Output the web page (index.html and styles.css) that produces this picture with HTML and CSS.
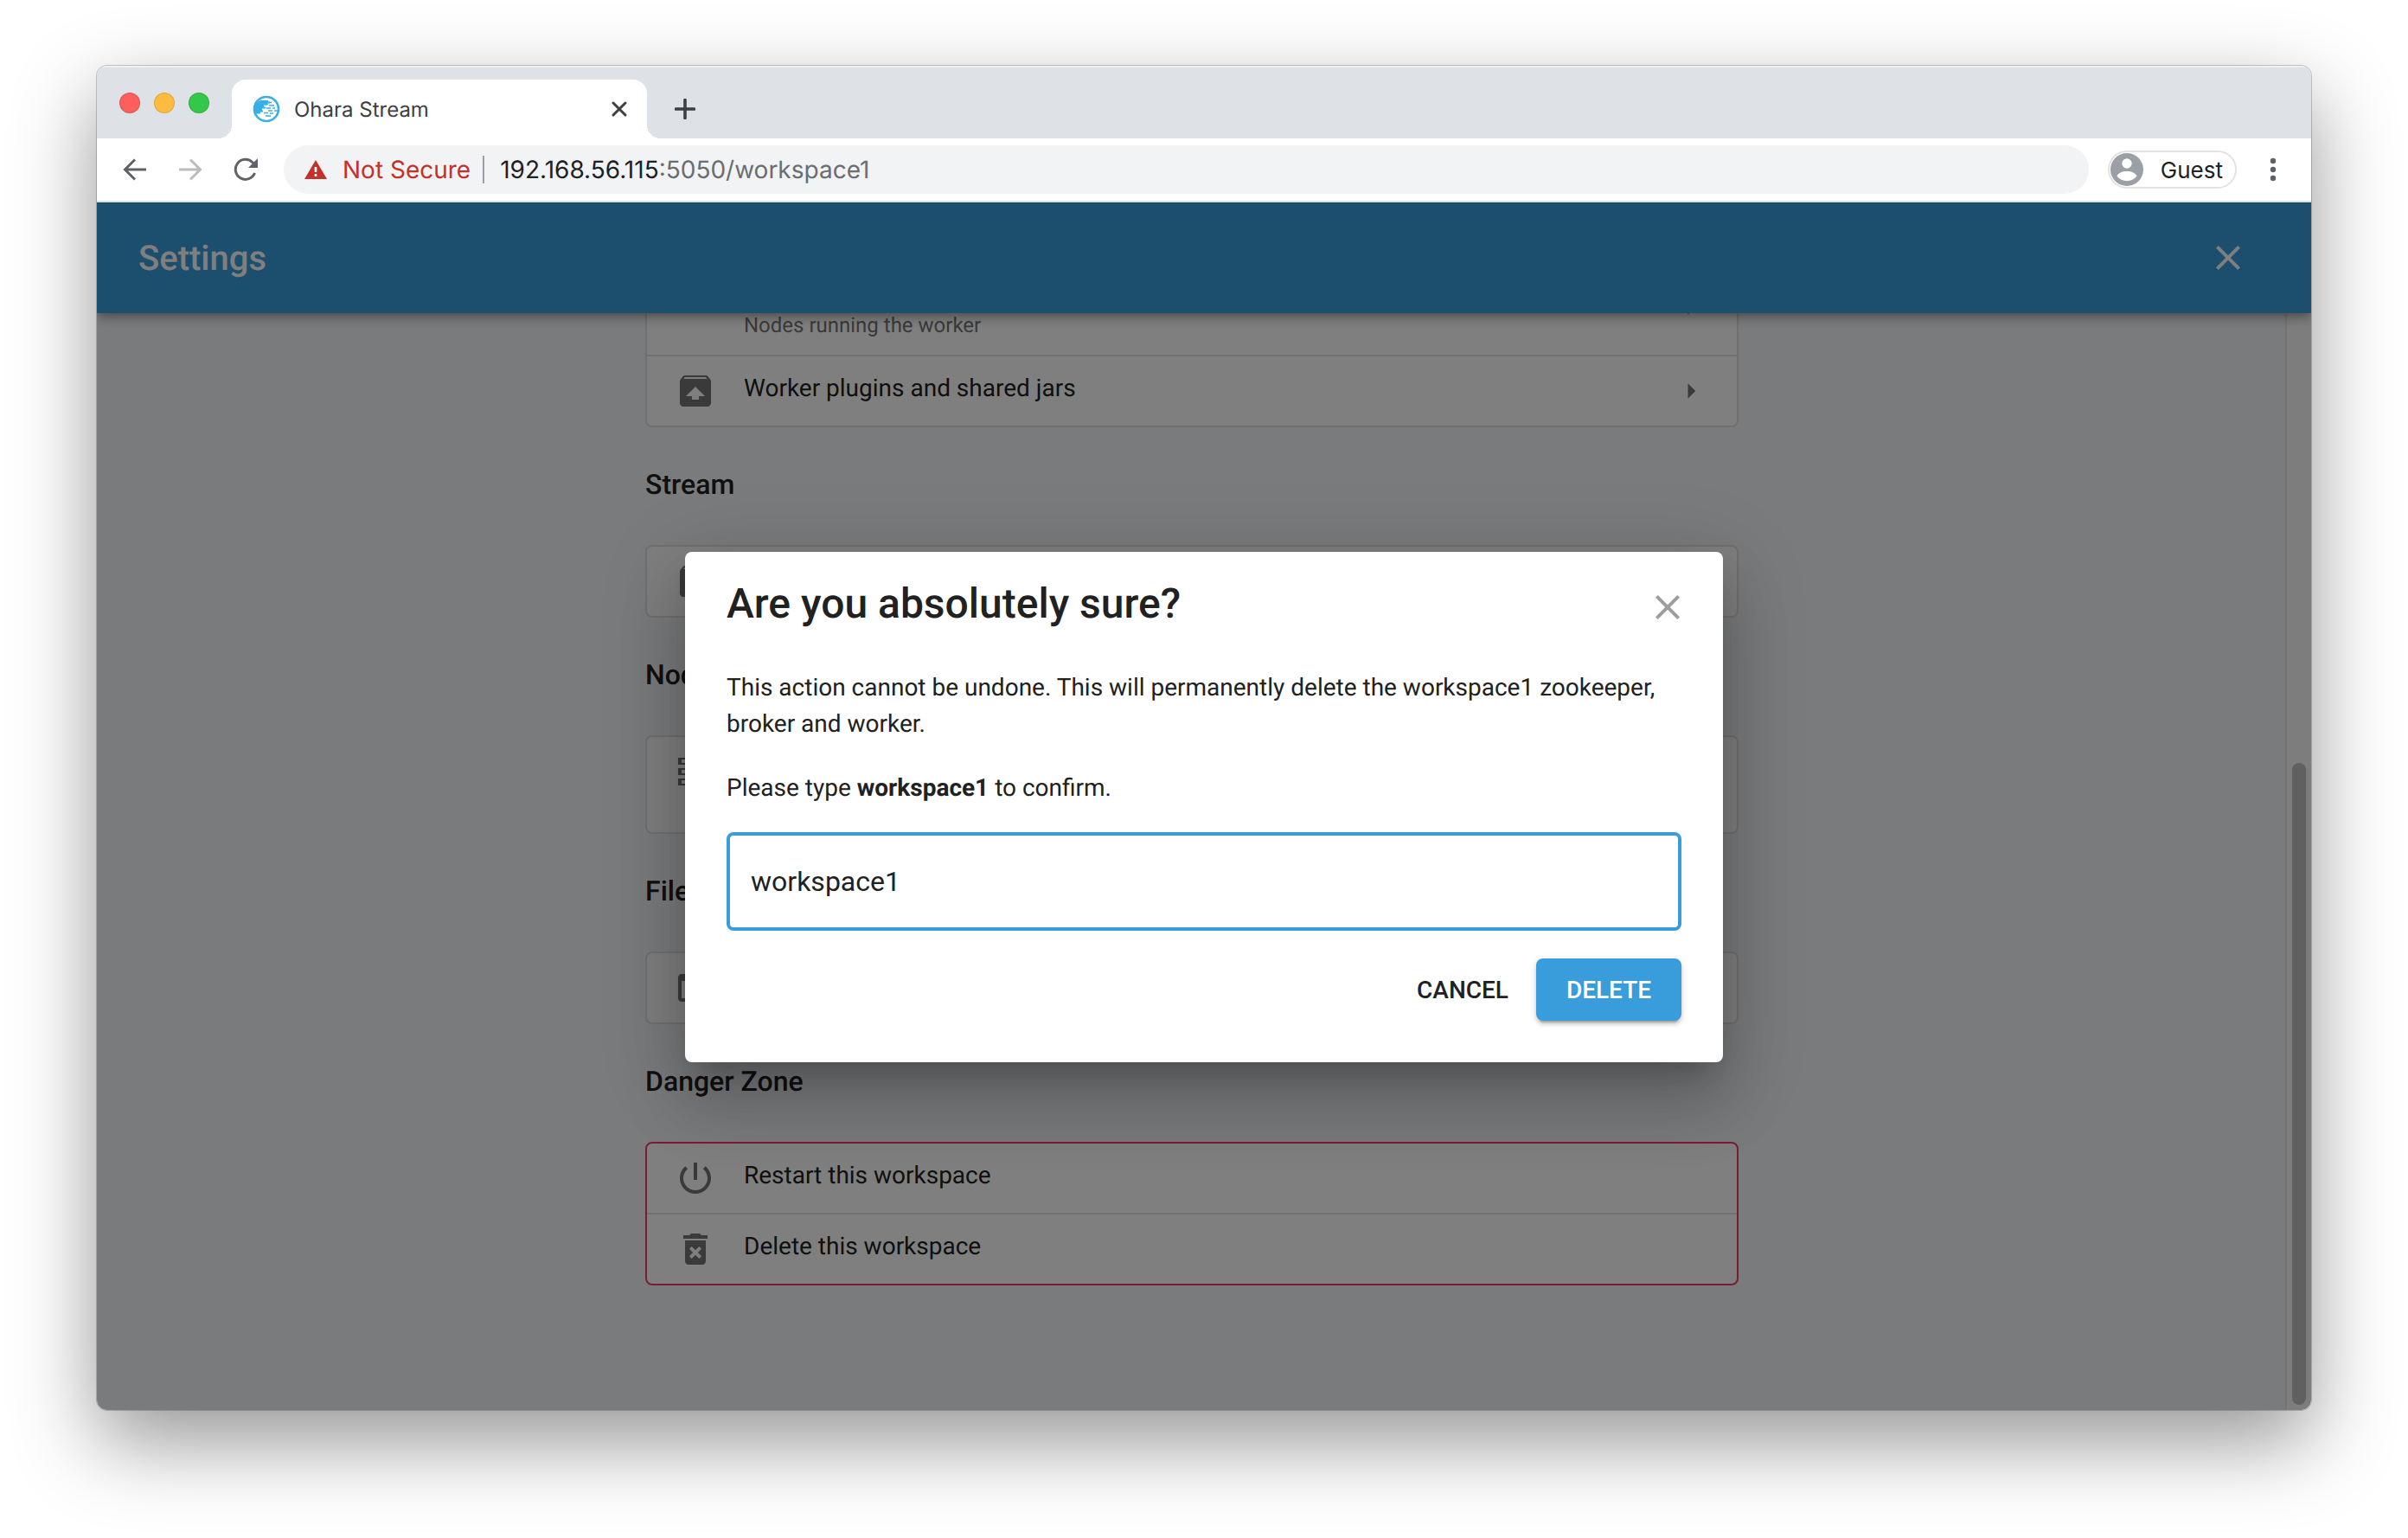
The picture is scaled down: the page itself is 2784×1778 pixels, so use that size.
FILE: index.html
```html
<!DOCTYPE html>
<html lang="en">
<head>
<meta charset="utf-8">
<title>Ohara Stream</title>
<link rel="stylesheet" href="styles.css">
</head>
<body>
<div class="window">
  <header class="tabstrip">
    <div class="lights"><span class="light light-red"></span><span class="light light-yellow"></span><span class="light light-green"></span></div>
    <div class="tab">
      <svg class="favicon" viewBox="0 0 32 32" aria-hidden="true">
        <circle cx="16" cy="16" r="14" fill="#fff" stroke="#38aee6" stroke-width="2.600"/>
        <path fill="#38aee6" d="M9 6h9v1.500h2v2h-3v2h-4v2h2v2h-4v2h1v2H9v2H3C1 15 3 9 9 6z"/>
        <path stroke="#38aee6" stroke-width="1.700" d="M18 8.500h4M14 10.500h4M19 12h6M16 15h5M23 15h3M18 18h5M25 18h4M13 20.500h5M20 21h4M15 24h6"/>
      </svg>
      <span class="tab-title">Ohara Stream</span>
      <button class="icon-button" aria-label="Close tab"><svg width="18" height="18" viewBox="0 0 18 18"><path d="M2 2l14 14M16 2L2 16" stroke="#3c4043" stroke-width="3" stroke-linecap="round"/></svg></button>
    </div>
    <button class="icon-button new-tab" aria-label="New tab"><svg width="24" height="24" viewBox="0 0 24 24"><path d="M12 1.500v21M1.500 12h21" stroke="#3c4043" stroke-width="3.600" stroke-linecap="round"/></svg></button>
  </header>
  <div class="toolbar">
    <nav class="nav">
      <button class="icon-button" aria-label="Back"><svg width="28" height="28" viewBox="0 0 28 28" fill="none" stroke="#5f6368" stroke-width="3"><path d="M27 14H3M14 2.500L2.500 14 14 25.500"/></svg></button>
      <button class="icon-button" aria-label="Forward"><svg width="28" height="28" viewBox="0 0 28 28" fill="none" stroke="#babcbe" stroke-width="3"><path d="M1 14h24M14 2.500L25.500 14 14 25.500"/></svg></button>
      <button class="icon-button" aria-label="Reload"><svg width="28" height="28" viewBox="0 0 28 28" fill="none" stroke="#5f6368" stroke-width="3"><path d="M24.500 18A11.500 11.500 0 1 1 22 5.800L25 9"/><path d="M28 1v11H17z" fill="#5f6368" stroke="none"/></svg></button>
    </nav>
    <div class="address">
      <svg width="26" height="22" viewBox="0 0 26 22" aria-hidden="true"><path fill="#c5302a" d="M13 0l13 22H0z"/><path fill="#fff" d="M11.700 8h2.600v6h-2.600zM11.700 16h2.600v3h-2.600z"/></svg>
      <span class="insecure">Not Secure</span>
      <span class="separator"></span>
      <span class="url"><span class="host">192.168.56.115</span>:5050/workspace1</span>
    </div>
    <button class="profile">
      <svg width="38" height="38" viewBox="0 0 38 38" aria-hidden="true"><circle cx="19" cy="19" r="19" fill="#9aa0a6"/><circle cx="19" cy="12" r="5.700" fill="#fff"/><path fill="#fff" d="M7.500 26.500c2.500-7.500 20.500-7.500 23 0-5.500 7.500-17.500 7.500-23 0z"/></svg>
      <span>Guest</span>
    </button>
    <button class="icon-button" aria-label="Menu"><svg width="8" height="28" viewBox="0 0 8 28" fill="#5f6368"><circle cx="4" cy="4" r="3.200"/><circle cx="4" cy="14" r="3.200"/><circle cx="4" cy="24" r="3.200"/></svg></button>
  </div>

  <div class="viewport">
    <header class="appbar">
      <h1 class="appbar-title">Settings</h1>
      <button class="icon-button" aria-label="Close settings"><svg class="icon" viewBox="0 0 24 24" fill="#fff"><path d="M19 6.410L17.590 5 12 10.590 6.410 5 5 6.410 10.590 12 5 17.590 6.410 19 12 13.410 17.590 19 19 17.590 13.410 12z"/></svg></button>
    </header>
    <div class="page">
      <main class="settings">
        <section>
          <ul class="card card-scrolled">
            <li class="row row-tall">
              <span class="icon"></span>
              <span class="row-text row-secondary">Nodes running the worker</span>
              <svg class="arrow" viewBox="0 0 24 24"><path d="M10 17l5-5-5-5v10z"/></svg>
            </li>
            <li class="row">
              <svg class="icon" viewBox="0 0 24 24"><path d="M20.550 5.220l-1.390-1.680C18.880 3.210 18.470 3 18 3H6c-.47 0-.88.210-1.150.550L3.460 5.220C3.170 5.570 3 6.010 3 6.500V19c0 1.100.890 2 2 2h14c1.100 0 2-.9 2-2V6.500c0-.49-.17-.93-.45-1.280zM12 9.500l5.500 5.500H14v2h-4v-2H6.500L12 9.500zM5.120 5l.820-1h12l.930 1H5.120z"/></svg>
              <span class="row-text">Worker plugins and shared jars</span>
              <svg class="arrow" viewBox="0 0 24 24"><path d="M10 17l5-5-5-5v10z"/></svg>
            </li>
          </ul>
        </section>
        <section>
          <h2 class="section-title">Stream</h2>
          <ul class="card">
            <li class="row"><svg class="icon" viewBox="0 0 24 24"><path d="M20.550 5.220l-1.390-1.680C18.880 3.210 18.470 3 18 3H6c-.47 0-.88.210-1.150.550L3.460 5.220C3.170 5.570 3 6.010 3 6.500V19c0 1.100.890 2 2 2h14c1.100 0 2-.9 2-2V6.500c0-.49-.17-.93-.45-1.280zM12 9.500l5.500 5.500H14v2h-4v-2H6.500L12 9.500zM5.120 5l.820-1h12l.930 1H5.120z"/></svg></li>
          </ul>
        </section>
        <section>
          <h2 class="section-title">Nodes</h2>
          <ul class="card">
            <li class="row row-tall"><svg class="icon" viewBox="0 0 24 24"><path d="M2 20h20v-4H2v4zm2-3h2v2H4v-2zM2 4v4h20V4H2zm4 3H4V5h2v2zm-4 7h20v-4H2v4zm2-3h2v2H4v-2z"/></svg></li>
          </ul>
        </section>
        <section>
          <h2 class="section-title">Files</h2>
          <ul class="card">
            <li class="row"><svg class="icon" viewBox="0 0 24 24"><path d="M20 4H4c-1.110 0-2 .9-2 2v12c0 1.100.890 2 2 2h16c1.100 0 2-.9 2-2V6c0-1.100-.9-2-2-2zm0 14H4V8h16v10z"/></svg></li>
          </ul>
        </section>
        <section>
          <h2 class="section-title">Danger Zone</h2>
          <ul class="card card-danger">
            <li class="row">
              <svg class="icon" viewBox="0 0 24 24"><path d="M13 3h-2v10h2V3zm4.830 2.170l-1.420 1.420C17.990 7.860 19 9.810 19 12c0 3.870-3.130 7-7 7s-7-3.130-7-7c0-2.190 1.010-4.140 2.580-5.420L6.170 5.170C4.230 6.820 3 9.260 3 12c0 4.970 4.030 9 9 9s9-4.030 9-9c0-2.740-1.230-5.180-3.170-6.830z"/></svg>
              <span class="row-text">Restart this workspace</span>
            </li>
            <li class="row">
              <svg class="icon" viewBox="0 0 24 24"><path d="M6 19c0 1.100.9 2 2 2h8c1.100 0 2-.9 2-2V7H6v12zm2.460-7.120l1.410-1.410L12 12.590l2.120-2.120 1.410 1.410L13.410 14l2.120 2.120-1.410 1.410L12 15.410l-2.120 2.120-1.410-1.410L10.590 14l-2.130-2.120zM15.500 4l-1-1h-5l-1 1H5v2h14V4z"/></svg>
              <span class="row-text">Delete this workspace</span>
            </li>
          </ul>
        </section>
      </main>
      <div class="scrollbar"><div class="thumb"></div></div>
    </div>

    <div class="backdrop">
      <form class="dialog" role="dialog" aria-labelledby="dialog-title">
        <button type="button" class="icon-button dialog-close" aria-label="Close"><svg class="icon" viewBox="0 0 24 24" fill="#9e9e9e"><path d="M19 6.410L17.590 5 12 10.590 6.410 5 5 6.410 10.590 12 5 17.590 6.410 19 12 13.410 17.590 19 19 17.590 13.410 12z"/></svg></button>
        <h2 class="dialog-title" id="dialog-title">Are you absolutely sure?</h2>
        <p class="dialog-text">This action cannot be undone. This will permanently delete the workspace1 zookeeper, broker and worker.</p>
        <label class="dialog-text dialog-label" for="confirm">Please type <b>workspace1</b> to confirm.</label>
        <input class="confirm" id="confirm" type="text" value="workspace1">
        <div class="actions">
          <button type="button" class="button">CANCEL</button>
          <button type="button" class="button button-primary">DELETE</button>
        </div>
      </form>
    </div>
  </div>
</div>
</body>
</html>
```
FILE: styles.css
```css
* { box-sizing: border-box; }
body {
  margin: 0;
  min-height: 100vh;
  padding: 76px 112px 148px;
  display: flex;
  background: #fff;
  color: #212121;
  font-family: Roboto, "Liberation Sans", sans-serif;
  text-rendering: geometricPrecision;
  overflow: hidden;
}
button { font: inherit; color: inherit; border: 0; background: none; padding: 0; }
svg { display: block; flex: none; }
h1, h2, p, ul { margin: 0; padding: 0; }
ul { list-style: none; }
.icon { width: 48px; height: 48px; flex: none; }
.icon-button { flex: none; }

.window {
  flex: 1;
  min-width: 0;
  display: flex;
  flex-direction: column;
  border-radius: 12px;
  overflow: hidden;
  box-shadow: 0 0 0 1px rgba(0, 0, 0, .2), 0 36px 96px rgba(0, 0, 0, .42);
}

/* Browser chrome */
.tabstrip {
  height: 84px;
  flex: none;
  display: flex;
  padding: 16px 0 0 26px;
  background: #dee1e6;
  box-shadow: inset 0 2px #eef0f2;
  font-family: Inter, "Liberation Sans", sans-serif;
}
.lights { display: flex; gap: 16px; padding-top: 15px; width: 130px; }
.light { width: 24px; height: 24px; border-radius: 50%; border: 1px solid rgba(0, 0, 0, .12); }
.light-red { background: #fc605c; }
.light-yellow { background: #fdbc40; }
.light-green { background: #34c84a; }
.tab {
  position: relative;
  width: 480px;
  display: flex;
  align-items: center;
  padding: 0 23px 0 24px;
  background: #fff;
  border-radius: 16px 16px 0 0;
  font-size: 24px;
  color: #3c4043;
}
.tab::before, .tab::after {
  content: "";
  position: absolute;
  bottom: 0;
  width: 16px;
  height: 16px;
}
.tab::before { left: -16px; background: radial-gradient(circle at 0 0, transparent 16px, #fff 16px); }
.tab::after { right: -16px; background: radial-gradient(circle at 100% 0, transparent 16px, #fff 16px); }
.favicon { width: 32px; height: 32px; }
.tab-title { flex: 1; margin-left: 16px; }
.new-tab { margin-left: 32px; }
.toolbar {
  height: 74px;
  flex: none;
  display: flex;
  align-items: center;
  padding: 0 40px 0 30px;
  background: #fff;
  border-bottom: 2px solid #dee1e6;
  font-family: Inter, "Liberation Sans", sans-serif;
  font-size: 28px;
}
.nav { display: flex; gap: 36px; }
.address {
  flex: 1;
  height: 56px;
  margin: 0 22px 0 30px;
  padding-left: 24px;
  display: flex;
  align-items: center;
  border-radius: 28px;
  background: #f1f3f4;
}
.insecure { margin-left: 18px; color: #c5302a; }
.separator { width: 2px; height: 32px; margin: 0 18px 0 14px; background: #9aa0a6; }
.url { color: #6a6d71; }
.host { color: #202124; }
.profile {
  height: 44px;
  margin-right: 38px;
  padding: 0 14px 0 1px;
  display: flex;
  align-items: center;
  gap: 20px;
  border: 2px solid #e1e2e3;
  border-radius: 22px;
  font-size: 26px;
  color: #202124;
}

/* Settings page */
.viewport { position: relative; flex: 1; min-height: 0; display: flex; flex-direction: column; overflow: hidden; }
.appbar {
  position: relative;
  height: 128px;
  flex: none;
  display: flex;
  align-items: center;
  justify-content: space-between;
  padding: 0 72px 0 48px;
  background: #399ddb;
  color: #fff;
  box-shadow: 0 4px 8px -2px rgba(0, 0, 0, .2), 0 8px 10px rgba(0, 0, 0, .14), 0 2px 20px rgba(0, 0, 0, .12);
  z-index: 1;
}
.appbar-title { font-size: 40px; font-weight: 500; }
.page { flex: 1; min-height: 0; display: flex; background: #f5f7fa; }
.settings { flex: 1; min-width: 0; padding-left: 2px; overflow: hidden; display: flex; flex-direction: column; align-items: center; }
.settings section { width: 100%; max-width: 1264px; }
.section-title { margin: 46px 0 50px; font-size: 32px; line-height: 40px; font-weight: 500; }
.card { background: #fff; border: 2px solid #e0e0e0; border-radius: 8px; }
/* The list is scrolled partly under the app bar */
.card-scrolled { margin-top: -64px; }
.card-danger { border-color: #f33a6a; }
.row { display: flex; align-items: flex-start; gap: 32px; padding: 16px 32px; min-height: 80px; fill: #757575; }
.row + .row { border-top: 2px solid #e0e0e0; }
.row-tall { min-height: 110px; }
.row-text { flex: 1; font-size: 28px; line-height: 42px; }
.row-secondary { align-self: flex-end; font-size: 24px; line-height: 36px; color: #757575; }
.arrow { width: 42px; height: 42px; align-self: center; }
.scrollbar {
  width: 30px;
  padding: 0 6px 6px;
  display: grid;
  grid-template-rows: 520fr 742fr;
  background: #fafafa;
  border-left: 2px solid #e8e8e8;
}
.thumb { grid-row: 2; background: #c1c1c1; border-radius: 8px; }

/* Confirmation dialog */
.backdrop {
  position: absolute;
  inset: 0;
  z-index: 2;
  display: flex;
  align-items: center;
  justify-content: center;
  padding-top: 2px;
  background: rgba(0, 0, 0, .5);
}
.dialog {
  position: relative;
  width: 1200px;
  max-width: 100%;
  padding: 28px 48px 48px;
  display: flex;
  flex-direction: column;
  background: #fff;
  border-radius: 8px;
  box-shadow: 0 22px 30px -14px rgba(0, 0, 0, .2), 0 48px 76px 6px rgba(0, 0, 0, .14), 0 18px 92px 16px rgba(0, 0, 0, .12);
}
.dialog-close { position: absolute; top: 16px; right: 16px; padding: 24px; }
.dialog-title { margin-bottom: 44px; font-size: 48px; line-height: 64px; font-weight: 500; }
.dialog-text { margin-bottom: 32px; font-size: 28px; line-height: 42px; }
.dialog-label { margin-bottom: 30px; }
.confirm {
  height: 114px;
  margin-bottom: 32px;
  padding: 0 24px;
  border: 4px solid #399ddb;
  border-radius: 8px;
  background: #fff;
  color: #212121;
  font: 400 32px Roboto, "Liberation Sans", sans-serif;
  outline: 0;
}
.actions { display: flex; justify-content: flex-end; gap: 16px; }
.button { height: 72px; padding: 0 16px; border-radius: 8px; font-size: 28px; font-weight: 500; }
.button-primary {
  min-width: 168px;
  background: #399ddb;
  color: #fff;
  box-shadow: 0 6px 2px -4px rgba(0, 0, 0, .2), 0 4px 4px rgba(0, 0, 0, .14), 0 2px 10px rgba(0, 0, 0, .12);
}
```
